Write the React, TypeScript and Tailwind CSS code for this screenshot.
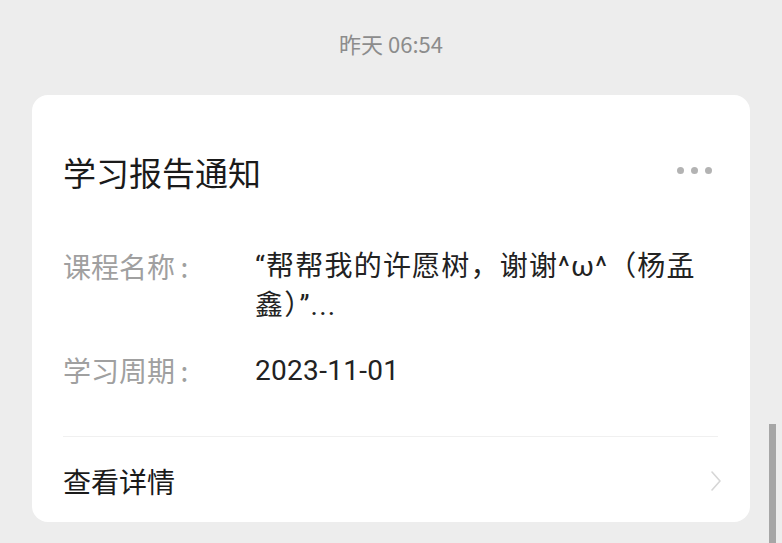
import React from 'react';

const font = { fontFamily: '"Noto Sans CJK SC", "Noto Sans", sans-serif' };
const valueFont = { fontFamily: 'Roboto, "Noto Sans CJK SC", sans-serif' };

const rows = [
  { label: '课程名称', value: '“帮帮我的许愿树，谢谢^ω^（杨孟鑫）”...', wide: true },
  { label: '学习周期', value: '2023-11-01', wide: false },
];

export default function App() {
  return (
    <div className="relative w-[782px] h-[543px] overflow-hidden bg-[#ededed]" style={font}>
      <div className="pt-[29px] h-[95px] text-center text-[22px] leading-[28px] text-[#8c8c8c]">
        昨天 06:54
      </div>

      <div className="ml-[32px] w-[718px] rounded-[16px] bg-white pl-[31px] pr-[32px] pt-[54px] pb-[19px]">
        <div className="flex items-center justify-between">
          <h3 className="text-[33px] leading-[46px] text-[#1a1a1a]">学习报告通知</h3>
          <div className="flex gap-[7px] mr-[6px] mb-[4px]">
            <span className="w-[7px] h-[7px] rounded-full bg-[#b3b3b3]" />
            <span className="w-[7px] h-[7px] rounded-full bg-[#b3b3b3]" />
            <span className="w-[7px] h-[7px] rounded-full bg-[#b3b3b3]" />
          </div>
        </div>

        <div className="mt-[52px] flex flex-col gap-[26px]">
          {rows.map(r => (
            <div key={r.label} className="flex text-[28px] leading-[39px]">
              <span className="w-[192px] shrink-0 text-[#a0a0a0]">{r.label}&thinsp;:</span>
              <span
                className={`w-[463px] text-[#222222] ${r.wide ? 'tracking-[1.2px]' : 'tracking-[0.3px]'}`}
                style={valueFont}
              >
                {r.value}
              </span>
            </div>
          ))}
        </div>

        <div className="mt-[46px] h-px bg-[#f0f0f0]" />

        <div className="mt-[22px] flex items-center justify-between">
          <span className="text-[28px] leading-[44px] text-[#1a1a1a]">查看详情</span>
          <svg width="12" height="22" viewBox="0 0 12 22" className="mr-[-4px]">
            <path d="M2 2 L10 11 L2 20" fill="none" stroke="#d6d6d6" strokeWidth="1.6" strokeLinecap="round" strokeLinejoin="round" />
          </svg>
        </div>
      </div>

      <div className="absolute right-[6px] top-[424px] w-[7px] h-[130px] bg-[#a6a6a6]" />
    </div>
  );
}
